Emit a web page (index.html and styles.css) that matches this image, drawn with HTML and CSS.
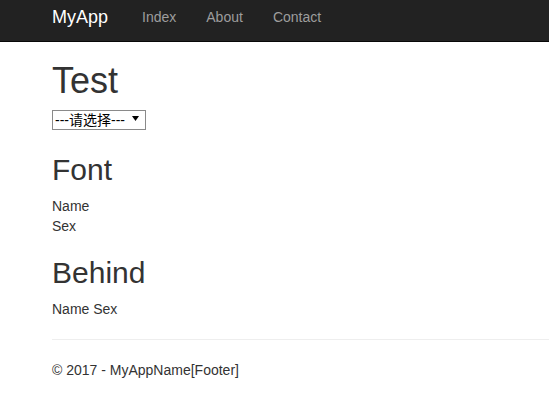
FILE: index.html
```html
<!DOCTYPE html>
<html lang="zh">
<head>
<meta charset="utf-8">
<title>Test - MyApp</title>
<link rel="stylesheet" href="styles.css">
</head>
<body>
<header class="navbar">
  <a class="brand" href="#">MyApp</a>
  <nav class="nav">
    <a class="nav-link" href="#">Index</a>
    <a class="nav-link" href="#">About</a>
    <a class="nav-link" href="#">Contact</a>
  </nav>
</header>
<main class="body-content">
  <h1 class="title">Test</h1>
  <div class="select-row">
    <div class="select">
      <span class="select-text">---请选择---</span>
      <svg class="select-arrow" width="7" height="5" viewBox="0 0 7 5"><polygon points="0,0 7,0 3.5,5" fill="#000"/></svg>
    </div>
  </div>
  <h2 class="section">Font</h2>
  <div class="line">Name</div>
  <div class="line">Sex</div>
  <h2 class="section">Behind</h2>
  <p class="para">Name Sex</p>
  <hr class="rule">
  <footer class="footer">
    <p class="para">© 2017 - MyAppName[Footer]</p>
  </footer>
</main>
</body>
</html>
```
FILE: styles.css
```css
html, body {
  margin: 0;
  padding: 0;
  background: #fff;
}
body {
  font-family: "Liberation Sans", Arial, "Noto Sans CJK SC", sans-serif;
  font-size: 14px;
  line-height: 20px;
  color: #333;
}
.navbar {
  display: flex;
  align-items: flex-start;
  height: 41px;
  background: #222;
  border-bottom: 1px solid #080808;
  padding-left: 52px;
}
.brand {
  font-size: 18px;
  line-height: 20px;
  padding-top: 7px;
  color: #fff;
  text-decoration: none;
}
.nav {
  display: flex;
  margin-left: 19px;
}
.nav-link {
  padding: 7px 15px 0;
  font-size: 14px;
  line-height: 20px;
  color: #9d9d9d;
  text-decoration: none;
}
.body-content {
  padding-left: 52px;
}
.title {
  font-size: 36px;
  line-height: 1.1;
  font-weight: normal;
  margin: 19px 0 9px;
}
.select-row {
  height: 23px;
}
.select {
  box-sizing: border-box;
  display: flex;
  align-items: center;
  width: 94px;
  height: 20px;
  border: 1px solid #8a8a8a;
  background: #fff;
  color: #000;
  font-family: "Liberation Sans", Arial, "Noto Sans CJK SC", sans-serif;
  font-size: 14px;
  line-height: 18px;
  padding-left: 2px;
}
.select-text {
  white-space: nowrap;
}
.select-arrow {
  margin-left: auto;
  margin-right: 6px;
  margin-top: -3px;
}
.section {
  font-size: 30px;
  line-height: 1.1;
  font-weight: normal;
  margin: 20px 0 10px;
}
.line {
  margin: 0;
}
.para {
  margin: 0 0 10px;
}
.rule {
  margin: 20px 0;
  border: 0;
  border-top: 1px solid #eee;
  height: 0;
}
.footer .para {
  margin: 0;
}
```
